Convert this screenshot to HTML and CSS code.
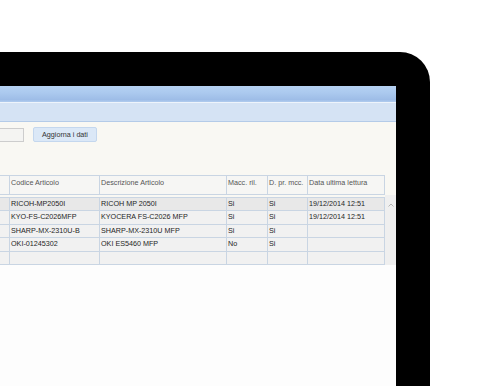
FILE: index.html
```html
<!DOCTYPE html>
<html lang="it">
<head>
    <meta charset="UTF-8">
    <meta name="viewport" content="width=device-width, initial-scale=1.0">
    <title>Letture contatori</title>
    <link rel="stylesheet" href="styles.css">
</head>
<body>
    <div class="device">
        <div class="screen">
            <div class="titlebar"></div>
            <div class="toolbar"></div>
            <div class="panel">
                <div class="filters">
                    <input class="field" type="text">
                    <button class="btn">Aggiorna i dati</button>
                </div>
                <div class="grid-wrap">
                    <div class="grid">
                        <div class="row head">
                            <div class="cell c0"></div>
                            <div class="cell c1">Codice Articolo</div>
                            <div class="cell c2">Descrizione Articolo</div>
                            <div class="cell c3">Macc. ril.</div>
                            <div class="cell c4">D. pr. mcc.</div>
                            <div class="cell c5">Data ultima lettura</div>
                        </div>
                        <div class="grid-body">
                            <div class="row sel">
                                <div class="cell c0"></div>
                                <div class="cell c1">RICOH-MP2050I</div>
                                <div class="cell c2">RICOH MP 2050I</div>
                                <div class="cell c3">Si</div>
                                <div class="cell c4">Si</div>
                                <div class="cell c5">19/12/2014 12:51</div>
                            </div>
                            <div class="row">
                                <div class="cell c0"></div>
                                <div class="cell c1">KYO-FS-C2026MFP</div>
                                <div class="cell c2">KYOCERA FS-C2026 MFP</div>
                                <div class="cell c3">Si</div>
                                <div class="cell c4">Si</div>
                                <div class="cell c5">19/12/2014 12:51</div>
                            </div>
                            <div class="row">
                                <div class="cell c0"></div>
                                <div class="cell c1">SHARP-MX-2310U-B</div>
                                <div class="cell c2">SHARP-MX-2310U MFP</div>
                                <div class="cell c3">Si</div>
                                <div class="cell c4">Si</div>
                                <div class="cell c5"></div>
                            </div>
                            <div class="row">
                                <div class="cell c0"></div>
                                <div class="cell c1">OKI-01245302</div>
                                <div class="cell c2">OKI ES5460 MFP</div>
                                <div class="cell c3">No</div>
                                <div class="cell c4">Si</div>
                                <div class="cell c5"></div>
                            </div>
                            <div class="row">
                                <div class="cell c0"></div>
                                <div class="cell c1"></div>
                                <div class="cell c2"></div>
                                <div class="cell c3"></div>
                                <div class="cell c4"></div>
                                <div class="cell c5"></div>
                            </div>
                        </div>
                    </div>
                    <div class="scroll">
                        <svg width="6" height="4" viewBox="0 0 6 4"><path d="M0.5 3.5 L3 1 L5.5 3.5" fill="none" stroke="#b4b4b4" stroke-width="1"/></svg>
                    </div>
                </div>
            </div>
        </div>
    </div>
</body>
</html>
```

FILE: styles.css
```css
body{
    margin: 0;
    padding: 0;
    background: #fff;
    font-family: "Liberation Sans", Arial, sans-serif;
}
.device{
    width: 396px;
    height: 300px;
    margin-top: 52px;
    padding: 34px 34px 0 0;
    background: #000;
    border-top-right-radius: 30px;
}
.screen{
    height: 300px;
    background: #fdfdfd;
    overflow: hidden;
}
.titlebar{
    height: 16px;
    background: linear-gradient(#b5d1f2 0%, #accaef 40%, #9ebde7 85%, #b1ccee 100%);
    border-bottom: 1px solid #eef4fb;
}
.toolbar{
    height: 18px;
    background: #d5e3f4;
    border-bottom: 1px solid #b4cbe8;
}
.panel{
    background: #f9f8f3;
    padding-top: 5px;
}
.filters{
    display: flex;
    align-items: center;
    height: 15px;
}
.field{
    box-sizing: border-box;
    width: 24px;
    height: 14px;
    margin: 0;
    padding: 0;
    border: 1px solid #cdcdcd;
    border-left: none;
    background: #f4f4f2;
}
.btn{
    box-sizing: border-box;
    width: 64px;
    height: 15px;
    margin: 0 0 0 9px;
    padding: 0;
    border: 1px solid #c4d7ee;
    border-radius: 2px;
    background: #dbe8f7;
    color: #333;
    font-family: "Liberation Sans", Arial, sans-serif;
    font-size: 7.2px;
}
.grid-wrap{
    display: flex;
    margin-top: 33px;
}
.grid{
    width: 385px;
    font-size: 7.2px;
    color: #252525;
}
.row{
    display: flex;
    box-sizing: border-box;
    height: 13.4px;
    border-bottom: 1px solid #c9d5e3;
    background: #f1f1f1;
}
.row.sel{
    background: #e8e8e8;
}
.row.head{
    height: 20px;
    border-top: 1px solid #c9d5e3;
    background: #f6f6f4;
    color: #555;
}
.grid-body{
    margin-top: 2px;
    border-top: 1px solid #c9d5e3;
}
.cell{
    box-sizing: border-box;
    border-right: 1px solid #c9d5e3;
    padding-left: 1px;
    line-height: 12px;
    white-space: nowrap;
    overflow: hidden;
}
.head .cell{
    padding-top: 1px;
    line-height: 12px;
}
.c0{ width: 10px; }
.c1{ width: 90px; }
.c2{ width: 127px; }
.c3{ width: 41px; }
.c4{ width: 40px; }
.c5{ width: 77px; }
.scroll{
    flex: 1;
    margin-top: 20px;
    background: #efefef;
    padding: 8px 0 0 3px;
}
.scroll svg{
    display: block;
}
```
